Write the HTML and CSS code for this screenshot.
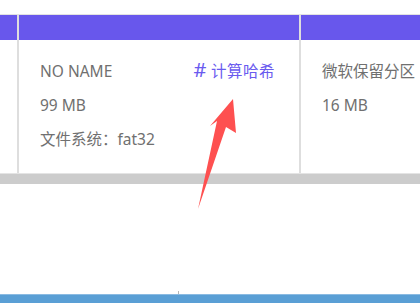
FILE: index.html
```html
<!DOCTYPE html>
<html lang="zh-CN">
<head>
  <meta charset="UTF-8"/>
  <meta name="viewport" content="width=device-width, initial-scale=1.0"/>
  <title>分区列表</title>
  <link rel="stylesheet" href="styles.css">
</head>
<body>
  <div class="page">
    <!-- 分区表 -->
    <div class="table">
      <div class="col col-edge">
        <div class="head"></div>
        <div class="cell"></div>
      </div>
      <div class="col col-main">
        <div class="head"></div>
        <div class="cell">
          <div class="info">
            <p>NO NAME</p>
            <p>99 MB</p>
            <p>文件系统：fat32</p>
          </div>
          <a class="hash" href="#"><span class="sharp">#</span>计算哈希</a>
        </div>
      </div>
      <div class="col col-last">
        <div class="head"></div>
        <div class="cell">
          <div class="info">
            <p>微软保留分区</p>
            <p>16 MB</p>
          </div>
        </div>
      </div>
    </div>
    <div class="scrollbar"></div>
    <div class="blank"></div>
    <div class="tick"></div>
    <div class="footer"></div>

    <svg class="arrow" width="420" height="303" viewBox="0 0 420 303">
      <polygon points="233,99 236,133 226,127 198,209 217,121 210,126" fill="#fe5050"/>
    </svg>
  </div>
</body>
</html>
```

FILE: styles.css
```css
* { box-sizing: border-box; font-family: 'Noto Sans', 'Noto Sans CJK SC', sans-serif; }
body { margin: 0; background: #fff; }
.page { position: relative; width: 420px; height: 303px; overflow: hidden; }
.table { display: flex; margin-top: 14px; border-top: 1px solid #e2e2e2; }
.col { display: flex; flex-direction: column; flex-shrink: 0; }
.col-edge { width: 19px; border-right: 2px solid #dedede; }
.col-main { width: 282px; border-right: 2px solid #dedede; }
.col-last { flex: 1 1 0; min-width: 0; overflow: hidden; }
.head { height: 25px; background: #6857ec; }
.cell { height: 133px; padding: 14px 24px 0 21px; display: flex; justify-content: space-between; align-items: flex-start; }
.info p { margin: 0; font-size: 15.5px; line-height: 34px; color: #707070; white-space: nowrap; }
.hash { font-size: 15.5px; line-height: 34px; color: #6a5bef; text-decoration: none; white-space: nowrap; letter-spacing: 0.5px; }
.sharp { font-size: 20px; line-height: 1; margin-right: 4px; }
.scrollbar { height: 11px; background: #cccccc; border-top: 1px solid #e4e4e4; }
.blank { height: 107px; }
.tick { width: 1px; height: 3px; margin-left: 178px; background: #b5b5b5; }
.footer { height: 9px; background: #5a9fd5; border-top: 1px solid #8bbbe2; }
.arrow { position: absolute; left: 0; top: 0; }
```
